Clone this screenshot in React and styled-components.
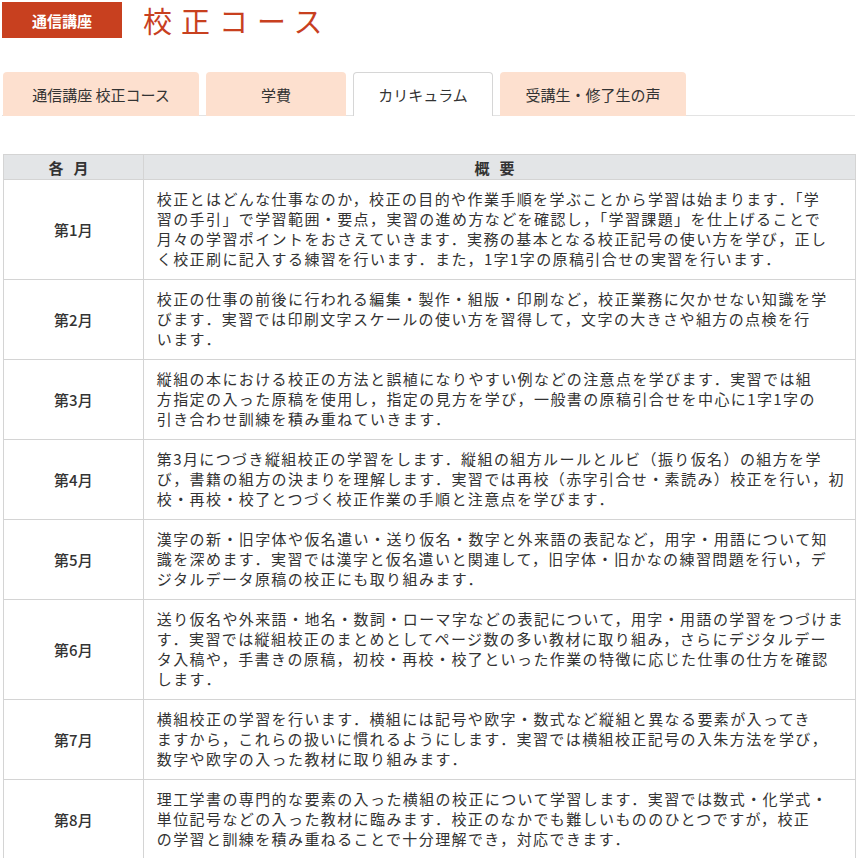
import React from "react";
import styled, { createGlobalStyle } from "styled-components";

const G = createGlobalStyle`
  body{margin:0;background:#fff;font-family:"Noto Sans CJK JP","Noto Sans",sans-serif;color:#333;}
`;
const Page = styled.div`padding:2px 3px 0 2px;`;
const Head = styled.div`display:flex;align-items:center;gap:21px;height:36px;`;
const Badge = styled.div`background:#c8401f;color:#fff;width:120px;height:36px;display:flex;align-items:center;justify-content:center;font-size:15px;font-weight:700;`;
const Title = styled.h1`margin:0;font-weight:400;font-size:29px;color:#c8401f;letter-spacing:9px;font-family:"Noto Sans CJK JP",serif;`;
const Tabs = styled.div`display:flex;gap:7px;margin-top:34px;padding-left:1px;border-bottom:1px solid #e3e3e3;`;
const Tab = styled.div`width:${p=>p.w}px;height:44px;box-sizing:border-box;border-radius:4px 4px 0 0;display:flex;align-items:center;justify-content:center;font-size:15px;color:#333;
  background:${p=>p.active?"#fff":"#fde0cf"};border:${p=>p.active?"1px solid #d6d6d6":"none"};border-bottom:none;margin-bottom:-1px;`;
const Table = styled.table`margin-top:38px;margin-left:1px;width:853px;border-collapse:collapse;`;
const Th = styled.th`background:#e3e5e7;border:1px solid #d4d4d4;height:24px;font-weight:700;font-size:15px;padding:0;letter-spacing:10px;`;
const Month = styled.td`width:141px;border:1px solid #d4d4d4;text-align:center;font-size:15px;font-weight:500;`;
const Desc = styled.td`border:1px solid #d4d4d4;padding:9px 10px 10px 13px;line-height:20px;font-size:15px;white-space:nowrap;letter-spacing:1.4px;`;

const rows = [
 ["第1月",["校正とはどんな仕事なのか，校正の目的や作業手順を学ぶことから学習は始まります．「学","習の手引」で学習範囲・要点，実習の進め方などを確認し，「学習課題」を仕上げることで","月々の学習ポイントをおさえていきます．実務の基本となる校正記号の使い方を学び，正し","く校正刷に記入する練習を行います．また，1字1字の原稿引合せの実習を行います．"]],
 ["第2月",["校正の仕事の前後に行われる編集・製作・組版・印刷など，校正業務に欠かせない知識を学","びます．実習では印刷文字スケールの使い方を習得して，文字の大きさや組方の点検を行","います．"]],
 ["第3月",["縦組の本における校正の方法と誤植になりやすい例などの注意点を学びます．実習では組","方指定の入った原稿を使用し，指定の見方を学び，一般書の原稿引合せを中心に1字1字の","引き合わせ訓練を積み重ねていきます．"]],
 ["第4月",["第3月につづき縦組校正の学習をします．縦組の組方ルールとルビ（振り仮名）の組方を学","び，書籍の組方の決まりを理解します．実習では再校（赤字引合せ・素読み）校正を行い，初","校・再校・校了とつづく校正作業の手順と注意点を学びます．"]],
 ["第5月",["漢字の新・旧字体や仮名遣い・送り仮名・数字と外来語の表記など，用字・用語について知","識を深めます．実習では漢字と仮名遣いと関連して，旧字体・旧かなの練習問題を行い，デ","ジタルデータ原稿の校正にも取り組みます．"]],
 ["第6月",["送り仮名や外来語・地名・数詞・ローマ字などの表記について，用字・用語の学習をつづけま","す．実習では縦組校正のまとめとしてページ数の多い教材に取り組み，さらにデジタルデー","タ入稿や，手書きの原稿，初校・再校・校了といった作業の特徴に応じた仕事の仕方を確認","します．"]],
 ["第7月",["横組校正の学習を行います．横組には記号や欧字・数式など縦組と異なる要素が入ってき","ますから，これらの扱いに慣れるようにします．実習では横組校正記号の入朱方法を学び，","数字や欧字の入った教材に取り組みます．"]],
 ["第8月",["理工学書の専門的な要素の入った横組の校正について学習します．実習では数式・化学式・","単位記号などの入った教材に臨みます．校正のなかでも難しいもののひとつですが，校正","の学習と訓練を積み重ねることで十分理解でき，対応できます．"]],
];

export default function App(){
  return <Page><G/>
    <Head><Badge>通信講座</Badge><Title>校正コース</Title></Head>
    <Tabs>
      <Tab w={196}>通信講座 校正コース</Tab>
      <Tab w={140}>学費</Tab>
      <Tab w={140} active>カリキュラム</Tab>
      <Tab w={186}>受講生・修了生の声</Tab>
    </Tabs>
    <Table><thead><tr><Th>各月</Th><Th>概要</Th></tr></thead>
      <tbody>{rows.map(([m,ls])=><tr key={m}><Month>{m}</Month><Desc>{ls.map((l,i)=><div key={i}>{l}</div>)}</Desc></tr>)}</tbody>
    </Table>
  </Page>;
}
